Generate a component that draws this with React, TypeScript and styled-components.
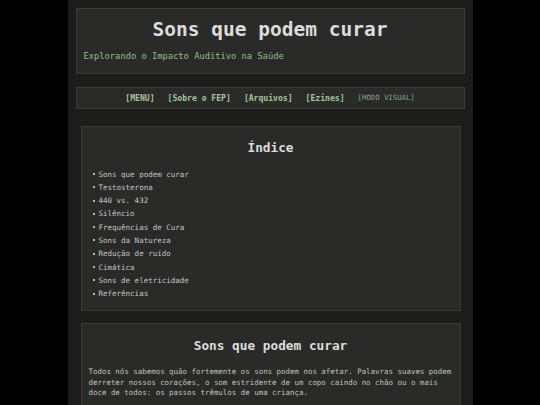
import styled, { createGlobalStyle } from "styled-components";

const GlobalStyle = createGlobalStyle`
  html, body {
    margin: 0;
    padding: 0;
    background: #000;
    height: 100%;
  }
  #root {
    min-height: 100%;
  }
`;

const Page = styled.div`
  width: 405px;
  min-height: 405px;
  margin: 0 auto;
  background-color: #1c1d1b;
  font-family: "DejaVu Sans Mono", "Liberation Mono", monospace;
  padding: 8px 0 0;
  box-sizing: border-box;
`;

const Header = styled.header`
  margin: 0 8px;
  padding: 9px 7px 11px;
  background-color: #2a2b29;
  border: 1px solid #3b3c3a;
`;

const Title = styled.h1`
  margin: 0;
  text-align: center;
  color: #dcdcdc;
  font-size: 19.5px;
  line-height: 24px;
  font-weight: bold;
`;

const Subtitle = styled.p`
  margin: 8px 0 0;
  color: #93bd8f;
  font-size: 8.75px;
  line-height: 12px;
`;

const Nav = styled.nav`
  margin: 13px 8px 0;
  background-color: #2a2b29;
  border: 1px solid #3b3c3a;
  display: flex;
  justify-content: center;
  align-items: center;
  gap: 13px;
  height: 20px;
`;

const NavLink = styled.a<{ $muted?: boolean }>`
  color: ${(p) => (p.$muted ? "#8aa38a" : "#a3c39c")};
  font-size: ${(p) => (p.$muted ? "7.3px" : "8.1px")};
  font-weight: ${(p) => (p.$muted ? "normal" : "bold")};
  text-decoration: none;
  line-height: 20px;
`;

const Main = styled.main`
  padding: 17px 12px 0 13px;
  display: flex;
  flex-direction: column;
  gap: 12px;
`;

const Card = styled.section<{ $top: number }>`
  background-color: #2a2b29;
  border: 1px solid #3b3c3a;
  padding: ${(p) => p.$top}px 7px 10px;
`;

const CardTitle = styled.h2`
  margin: 0;
  text-align: center;
  color: #dcdcdc;
  font-size: 12.75px;
  line-height: 16px;
  font-weight: bold;
`;

const List = styled.ul`
  margin: 11.5px 0 0;
  padding: 0 0 0 10px;
  list-style: none;
`;

const Item = styled.li`
  position: relative;
  color: #c4c4c4;
  font-size: 7.5px;
  line-height: 13.3px;
  &::before {
    content: "";
    position: absolute;
    left: -6px;
    top: 5.5px;
    width: 2px;
    height: 2px;
    background: #b8b8b8;
  }
`;

const Paragraph = styled.p`
  margin: 13px 0 0;
  color: #b9c4b3;
  font-size: 7.45px;
  line-height: 10.4px;
`;

const topics = [
  "Sons que podem curar",
  "Testosterona",
  "440 vs. 432",
  "Silêncio",
  "Frequências de Cura",
  "Sons da Natureza",
  "Redução de ruído",
  "Cimática",
  "Sons de eletricidade",
  "Referências",
];

export default function App() {
  return (
    <>
      <GlobalStyle />
      <Page>
        <Header>
          <Title>Sons que podem curar</Title>
          <Subtitle>Explorando o Impacto Auditivo na Saúde</Subtitle>
        </Header>
        <Nav>
          <NavLink href="#">[MENU]</NavLink>
          <NavLink href="#">[Sobre o FEP]</NavLink>
          <NavLink href="#">[Arquivos]</NavLink>
          <NavLink href="#">[Ezines]</NavLink>
          <NavLink href="#" $muted>
            [MODO VISUAL]
          </NavLink>
        </Nav>
        <Main>
          <Card $top={13}>
            <CardTitle>Índice</CardTitle>
            <List>
              {topics.map((t) => (
                <Item key={t}>{t}</Item>
              ))}
            </List>
          </Card>
          <Card $top={14}>
            <CardTitle>Sons que podem curar</CardTitle>
            <Paragraph>
              Todos nós sabemos quão fortemente os sons podem nos afetar.
              Palavras suaves podem derreter nossos corações, o som estridente
              de um copo caindo no chão ou o mais doce de todos: os passos
              trêmulos de uma criança.
            </Paragraph>
          </Card>
        </Main>
      </Page>
    </>
  );
}
